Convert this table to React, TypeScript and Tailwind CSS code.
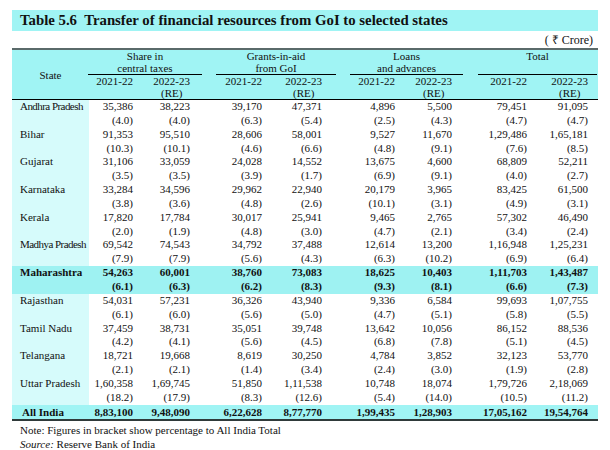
const rows: { state: string; tight?: boolean; hl?: boolean; v: [string, string][] }[] = [
  { state: 'Andhra Pradesh', tight: true, v: [['35,386', '4.0'], ['38,223', '4.0'], ['39,170', '6.3'], ['47,371', '5.4'], ['4,896', '2.5'], ['5,500', '4.3'], ['79,451', '4.7'], ['91,095', '4.7']] },
  { state: 'Bihar', v: [['91,353', '10.3'], ['95,510', '10.1'], ['28,606', '4.6'], ['58,001', '6.6'], ['9,527', '4.8'], ['11,670', '9.1'], ['1,29,486', '7.6'], ['1,65,181', '8.5']] },
  { state: 'Gujarat', v: [['31,106', '3.5'], ['33,059', '3.5'], ['24,028', '3.9'], ['14,552', '1.7'], ['13,675', '6.9'], ['4,600', '9.1'], ['68,809', '4.0'], ['52,211', '2.7']] },
  { state: 'Karnataka', v: [['33,284', '3.8'], ['34,596', '3.6'], ['29,962', '4.8'], ['22,940', '2.6'], ['20,179', '10.1'], ['3,965', '3.1'], ['83,425', '4.9'], ['61,500', '3.1']] },
  { state: 'Kerala', v: [['17,820', '2.0'], ['17,784', '1.9'], ['30,017', '4.8'], ['25,941', '3.0'], ['9,465', '4.7'], ['2,765', '2.1'], ['57,302', '3.4'], ['46,490', '2.4']] },
  { state: 'Madhya Pradesh', tight: true, v: [['69,542', '7.9'], ['74,543', '7.9'], ['34,792', '5.6'], ['37,488', '4.3'], ['12,614', '6.3'], ['13,200', '10.2'], ['1,16,948', '6.9'], ['1,25,231', '6.4']] },
  { state: 'Maharashtra', hl: true, v: [['54,263', '6.1'], ['60,001', '6.3'], ['38,760', '6.2'], ['73,083', '8.3'], ['18,625', '9.3'], ['10,403', '8.1'], ['1,11,703', '6.6'], ['1,43,487', '7.3']] },
  { state: 'Rajasthan', v: [['54,031', '6.1'], ['57,231', '6.0'], ['36,326', '5.6'], ['43,940', '5.0'], ['9,336', '4.7'], ['6,584', '5.1'], ['99,693', '5.8'], ['1,07,755', '5.5']] },
  { state: 'Tamil Nadu', v: [['37,459', '4.2'], ['38,731', '4.1'], ['35,051', '5.6'], ['39,748', '4.5'], ['13,642', '6.8'], ['10,056', '7.8'], ['86,152', '5.1'], ['88,536', '4.5']] },
  { state: 'Telangana', v: [['18,721', '2.1'], ['19,668', '2.1'], ['8,619', '1.4'], ['30,250', '3.4'], ['4,784', '2.4'], ['3,852', '3.0'], ['32,123', '1.9'], ['53,770', '2.8']] },
  { state: 'Uttar Pradesh', v: [['1,60,358', '18.2'], ['1,69,745', '17.9'], ['51,850', '8.3'], ['1,11,538', '12.6'], ['10,748', '5.4'], ['18,074', '14.0'], ['1,79,726', '10.5'], ['2,18,069', '11.2']] },
]

const allIndia = ['8,83,100', '9,48,090', '6,22,628', '8,77,770', '1,99,435', '1,28,903', '17,05,162', '19,54,764']

const groups = [
  { a: 'Share in', b: 'central taxes', cls: 'ml-[-1px] w-[114px]' },
  { a: 'Grants-in-aid', b: 'from GoI', cls: 'ml-[14px] w-[120px]' },
  { a: 'Loans', b: 'and advances', cls: 'ml-[14px] w-[113px]' },
  { a: 'Total', b: '', cls: 'ml-[15px] w-[119px]' },
]

// same column grid for header, body and total row
const cols = 'grid grid-cols-[77px_44px_57px_72px_60px_73px_57px_75px_61px_9px]'

export default function App() {
  return (
    <div className="w-[610px] h-[450px] bg-white px-[12px] pt-[10px] text-[#111] font-['Liberation_Serif',serif]">
      <div className="h-[21px] bg-[#a0f4f4] pl-[8px] text-[14.8px] font-bold leading-[21px] whitespace-pre">
        Table 5.6  Transfer of financial resources from GoI to selected states
      </div>
      <div className="h-[17px] pr-[5px] text-right text-[12px] leading-[19px]">( ₹ Crore)</div>

      {/* header */}
      <div className={`${cols} border-t-2 border-b border-t-[#5a6a6a] border-b-black bg-[#a0f4f4] text-[11px] leading-[12px]`}>
        <div className="row-span-2 flex items-center justify-center">State</div>
        <div className="col-span-9 flex">
          {groups.map((g) => (
            <div key={g.a} className={`${g.cls} h-[25px] border-b border-black text-center`}>
              <div>{g.a}</div>
              <div>{g.b}</div>
            </div>
          ))}
        </div>
        {[0, 1, 2, 3, 4, 5, 6, 7].map((i) => (
          <div key={i} className="text-right">
            <span className="inline-block text-center">
              {i % 2 === 0 ? '2021-22' : '2022-23'}
              {i % 2 === 1 && <><br />(RE)</>}
            </span>
          </div>
        ))}
        <div />
      </div>

      {/* body */}
      <div className="text-[11px] leading-[13.85px]">
        {rows.map((r) => (
          <div key={r.state} className={`${cols} h-[27.7px] ${r.hl ? 'bg-[#9ef2f2] font-bold' : ''}`}>
            <div className={`pl-[8px] ${r.hl ? '' : 'bg-[#d6fbfb]'} ${r.tight ? 'tracking-[-0.55px]' : ''}`}>{r.state}</div>
            {r.v.map(([n, p], i) => (
              <div key={i} className="text-right">
                <div>{n}</div>
                <div>({p})</div>
              </div>
            ))}
            <div />
          </div>
        ))}
        <div className={`${cols} h-[16px] border-b-2 border-[#2f3a3a] bg-[#a0f4f4] font-bold leading-[14px]`}>
          <div className="pl-[10px]">All India</div>
          {allIndia.map((n) => (
            <div key={n} className="text-right">{n}</div>
          ))}
          <div />
        </div>
      </div>

      <div className="pl-[8px] pt-[2px] text-[11px] leading-[14px]">
        <div>Note: Figures in bracket show percentage to All India Total</div>
        <div><i>Source:</i> Reserve Bank of India</div>
      </div>
    </div>
  )
}
